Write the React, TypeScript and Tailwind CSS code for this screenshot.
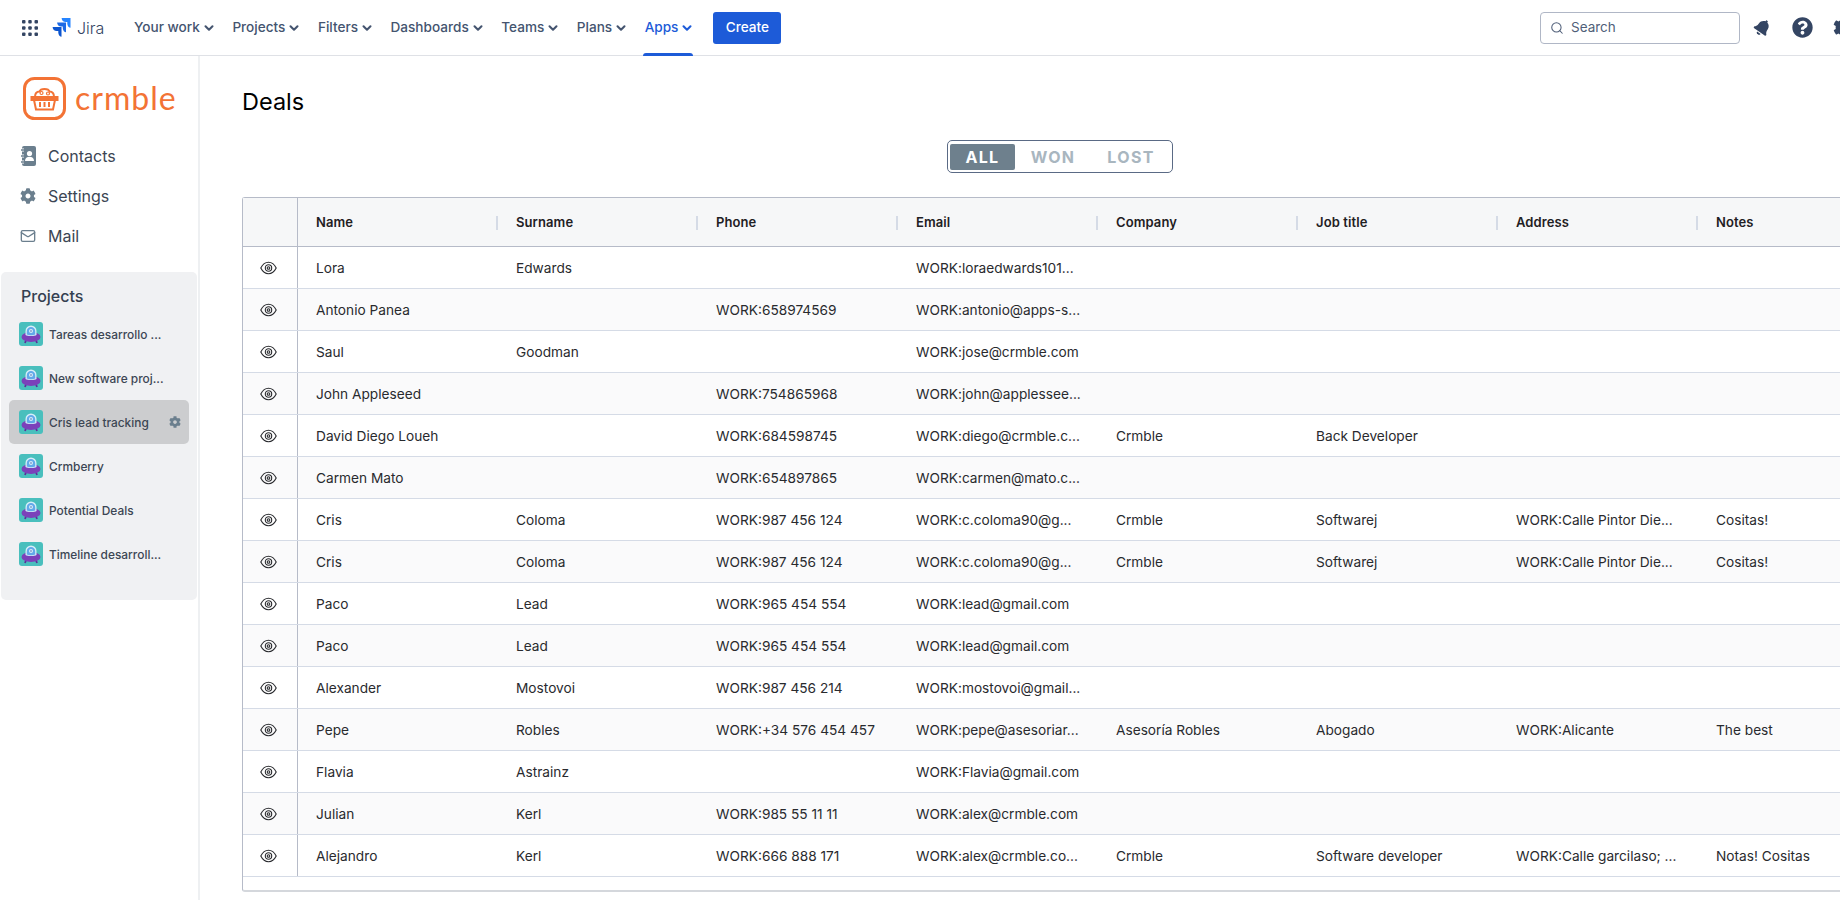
import React from 'react';
import { ChevronDown, Mail, Search } from 'lucide-react';
import { FaBell, FaCog, FaQuestionCircle } from 'react-icons/fa';

const navItems = ['Your work', 'Projects', 'Filters', 'Dashboards', 'Teams', 'Plans', 'Apps'];
const columns = ['Name', 'Surname', 'Phone', 'Email', 'Company', 'Job title', 'Address', 'Notes'];
const projects = [
  'Tareas desarrollo ...',
  'New software proj...',
  'Cris lead tracking',
  'Crmberry',
  'Potential Deals',
  'Timeline desarroll...',
];

const rows = [
  ['Lora', 'Edwards', '', 'WORK:loraedwards101...', '', '', '', ''],
  ['Antonio Panea', '', 'WORK:658974569', 'WORK:antonio@apps-s...', '', '', '', ''],
  ['Saul', 'Goodman', '', 'WORK:jose@crmble.com', '', '', '', ''],
  ['John Appleseed', '', 'WORK:754865968', 'WORK:john@applessee...', '', '', '', ''],
  ['David Diego Loueh', '', 'WORK:684598745', 'WORK:diego@crmble.c...', 'Crmble', 'Back Developer', '', ''],
  ['Carmen Mato', '', 'WORK:654897865', 'WORK:carmen@mato.c...', '', '', '', ''],
  ['Cris', 'Coloma', 'WORK:987 456 124', 'WORK:c.coloma90@g...', 'Crmble', 'Softwarej', 'WORK:Calle Pintor Die...', 'Cositas!'],
  ['Cris', 'Coloma', 'WORK:987 456 124', 'WORK:c.coloma90@g...', 'Crmble', 'Softwarej', 'WORK:Calle Pintor Die...', 'Cositas!'],
  ['Paco', 'Lead', 'WORK:965 454 554', 'WORK:lead@gmail.com', '', '', '', ''],
  ['Paco', 'Lead', 'WORK:965 454 554', 'WORK:lead@gmail.com', '', '', '', ''],
  ['Alexander', 'Mostovoi', 'WORK:987 456 214', 'WORK:mostovoi@gmail...', '', '', '', ''],
  ['Pepe', 'Robles', 'WORK:+34 576 454 457', 'WORK:pepe@asesoriar...', 'Asesoría Robles', 'Abogado', 'WORK:Alicante', 'The best'],
  ['Flavia', 'Astrainz', '', 'WORK:Flavia@gmail.com', '', '', '', ''],
  ['Julian', 'Kerl', 'WORK:985 55 11 11', 'WORK:alex@crmble.com', '', '', '', ''],
  ['Alejandro', 'Kerl', 'WORK:666 888 171', 'WORK:alex@crmble.co...', 'Crmble', 'Software developer', 'WORK:Calle garcilaso; ...', 'Notas! Cositas'],
];

const AppGrid = () => (
  <svg width="16" height="16" viewBox="0 0 16 16" fill="#344563">
    {[1.75, 8, 14.25].map((y) =>
      [1.75, 8, 14.25].map((x) => <rect key={`${x}-${y}`} x={x - 1.75} y={y - 1.75} width="3.5" height="3.5" rx="1" />),
    )}
  </svg>
);

const JiraMark = () => (
  <svg width="19" height="19" viewBox="0 0 19 19">
    <path d="M18.5 0H9.6c0 2.3 1.8 4.1 4.1 4.1h1.6v1.6c0 2.3 1.9 4.1 3.2 4.1z" fill="#2684ff" />
    <path d="M14 4.5H5.1c0 2.3 1.8 4.1 4.1 4.1h1.6v1.6c0 2.3 1.9 4.1 3.2 4.1z" fill="#1d6ae5" />
    <path d="M9.5 9H.6c0 2.3 1.8 4.1 4.1 4.1h1.6v1.6c0 2.3 1.9 4.1 3.2 4.1z" fill="#0c55cf" />
  </svg>
);

const BasketLogo = () => (
  <svg width="43" height="43" viewBox="0 0 43 43" fill="none" stroke="#f37335" strokeWidth="2">
    <rect x="1.500" y="1.500" width="40" height="40" rx="10" strokeWidth="3" />
    <path d="M8.500 20h26v3h-26z" fill="#f37335" />
    <path d="M11 23l2 9.500h17L32 23" />
    <path d="M17 25v5M21.500 25v5M26 25v5" />
    <path d="M12 20c0-3.500 2-5.500 4.500-5.500 1-3.500 9-3.500 10 0 3 0 4.500 2 4.500 5.500" />
    <circle cx="18.500" cy="16" r="1.500" strokeWidth="1.200" />
    <circle cx="25" cy="16.500" r="1.500" strokeWidth="1.200" />
  </svg>
);

const ContactsIcon = () => (
  <svg width="15" height="20" viewBox="0 0 15 20">
    <rect x="1" y="0" width="14" height="20" rx="2" fill="#6b7f8e" />
    <circle cx="8.500" cy="7.500" r="2.600" fill="#fff" />
    <path d="M4 15c0-3 2-4.200 4.500-4.200S13 12 13 15z" fill="#fff" />
    <path d="M0 4h3M0 10h3M0 16h3" stroke="#fff" strokeWidth="3" />
    <path d="M0 4h3M0 10h3M0 16h3" stroke="#6b7f8e" strokeWidth="1.400" />
  </svg>
);

const ProjectIcon = () => (
  <svg width="24" height="24" viewBox="0 0 24 24" className="shrink-0">
    <rect width="24" height="24" rx="3" fill="#49bfbd" />
    <path d="M6 21l1.500-4M18 21l-1.500-4" stroke="#5e2f9b" strokeWidth="1.800" />
    <ellipse cx="12" cy="15" rx="9.500" ry="5" fill="#7b41ba" />
    <path d="M6.500 13V9a5.500 5.500 0 0 1 11 0v4c-2 1.300-9 1.300-11 0z" fill="#d6eef8" />
    <path d="M7.800 12.500V9.200a4.200 4.200 0 0 1 8.400 0v3.300c-2 1-6.400 1-8.400 0z" fill="#62a9ea" />
    <circle cx="12" cy="9" r="2" fill="#d6eef8" />
    <circle cx="12" cy="9" r="0.800" fill="#4d6fb5" />
  </svg>
);

const EyeIcon = () => (
  <svg width="17" height="14" viewBox="0 0 17 14" fill="none" stroke="#292a2e" strokeWidth="1.100" className="mr-[3px]">
    <path d="M.8 7C2.800 3 5.400 1.300 8.500 1.300S14.200 3 16.200 7c-2 4-4.600 5.700-7.700 5.700S2.800 11 .8 7z" />
    <circle cx="8.500" cy="7" r="3.200" />
    <circle cx="8.500" cy="7" r="1.300" />
  </svg>
);

const App: React.FC = () => {
  return (
    <div className="h-screen w-[1840px] overflow-hidden flex flex-col bg-white font-[Inter,sans-serif] text-[#292a2e]">
      {/* Jira top bar */}
      <nav className="h-[56px] shrink-0 border-b border-[#dfe1e6] flex items-center pl-[22px]">
        <AppGrid />
        <div className="ml-[14px] flex items-center gap-[6px] w-[62px]">
          <JiraMark />
          <span className="text-[16px] font-light text-[#344563] leading-none">Jira</span>
        </div>
        <div className="ml-[18px] flex h-full gap-[15.5px]">
          {navItems.map((item) => {
            const active = item === 'Apps';
            return (
              <div
                key={item}
                className={`relative flex items-center gap-[2px] px-[2px] text-[13.6px] font-medium ${active ? 'text-[#1d5bd8]' : 'text-[#44546f]'}`}
              >
                {item}
                <ChevronDown size={14} strokeWidth={3.5} className="mr-[-3px]" />
                {active && <div className="absolute bottom-[-1px] left-0 right-0 h-[3px] rounded-t-sm bg-[#1d5bd8]" />}
              </div>
            );
          })}
        </div>
        <button className="ml-[20px] h-[32px] w-[68px] rounded-[3px] bg-[#1d5bd8] text-white text-[13.6px] font-medium">Create</button>
        <div className="ml-auto flex items-center">
          <div className="w-[200px] h-[32px] rounded-[4px] border-[1.5px] border-[#b0b7c6] flex items-center pl-[9px] gap-[7px] text-[13.5px] text-[#505f79]">
            <Search size={14} strokeWidth={1.8} />
            Search
          </div>
          <FaBell size={17} className="ml-[14px] text-[#344563] rotate-[35deg]" />
          <FaQuestionCircle size={21} className="ml-[21px] text-[#344563]" />
          <FaCog size={21} className="ml-[20px] mr-[-14px] text-[#344563]" />
        </div>
      </nav>

      <div className="flex flex-1 min-h-0">
        {/* Sidebar */}
        <aside className="w-[200px] shrink-0 border-r-2 border-[#eef0f2]">
          <div className="pl-[23px] pt-[21px] flex items-center gap-[9px]">
            <BasketLogo />
            <span className="text-[32px] leading-none font-[Lato,sans-serif] text-[#f37335] tracking-[1px] pb-[2px]">crmble</span>
          </div>
          <div className="mt-[16px] text-[16px] text-[#3c4654]">
            <div className="h-10 flex items-center pl-[21px] gap-[12px]">
              <ContactsIcon />
              Contacts
            </div>
            <div className="h-10 flex items-center pl-[20px] gap-[12px]">
              <FaCog size={16} className="text-[#6b7f8e]" />
              Settings
            </div>
            <div className="h-10 flex items-center pl-[20px] gap-[12px]">
              <Mail size={16} strokeWidth={2} className="text-[#6b7f8e]" />
              Mail
            </div>
          </div>
          <div className="mt-[16px] ml-[1px] w-[196px] h-[328px] rounded-[5px] bg-[#f0f1f3] px-[8px] pt-[12px]">
            <div className="h-6 pl-[12px] text-[16px] leading-6 font-medium text-[#344050]">Projects</div>
            <div className="mt-[4px]">
              {projects.map((name, i) => (
                <div
                  key={name}
                  className={`relative h-[44px] w-[180px] rounded-[5px] flex items-center pl-[10px] gap-[6px] text-[11.9px] font-medium text-[#3c4654] ${i === 2 ? 'bg-[#cccdcf]' : ''}`}
                >
                  <ProjectIcon />
                  <span className="pt-[2px]">{name}</span>
                  {i === 2 && <FaCog size={12} className="absolute right-[8px] text-[#6b7f8e]" />}
                </div>
              ))}
            </div>
          </div>
        </aside>

        {/* Deals */}
        <main className="flex-1 min-w-0 pl-[42px]">
          <h1 className="pt-[30px] text-[23.5px] leading-8 text-black">Deals</h1>
          <div className="w-[1636px] mt-[22px] flex justify-center">
            <div className="w-[226px] h-[33px] rounded-[5px] border-[1.5px] border-[#5a6a85] flex items-center pl-[2px] text-[16px] font-bold tracking-[1.3px] text-[#a9b6bf]">
              <div className="w-[65px] h-[26px] rounded-[2px] bg-[#6e808d] text-white flex items-center justify-center">ALL</div>
              <div className="w-[76px] text-center">WON</div>
              <div className="w-[80px] text-center">LOST</div>
            </div>
          </div>
          <div className="mt-[24px] w-[1700px] h-[695px] rounded-tl-[3px] rounded-bl-[3px] border-l border-t border-b-2 border-[#b6bbc8] border-b-[#d4d7dc] text-[13.7px]">
            <div className="h-[49px] flex bg-[#f6f7f8] border-b border-[#b6bbc8] text-[13px] font-semibold text-[#1f2023] tracking-[0.1px]">
              <div className="w-[55px] shrink-0 border-r border-[#b6bbc8]" />
              {columns.map((col, i) => (
                <div key={col} className="w-[200px] shrink-0 flex items-center justify-between pl-[18px] pt-[1px]">
                  {col}
                  {i < columns.length - 1 && <div className="w-[2px] h-[14px] bg-[#d5dbe6]" />}
                </div>
              ))}
            </div>
            {rows.map((row, r) => (
              <div key={r} className={`h-[42px] flex border-b border-[#d5dbe6] ${r % 2 === 1 ? 'bg-[#fafafb]' : 'bg-white'}`}>
                <div className="w-[55px] shrink-0 border-r border-[#b6bbc8] flex items-center justify-center">
                  <EyeIcon />
                </div>
                {row.map((cell, c) => (
                  <div key={c} className="w-[200px] shrink-0 flex items-center pl-[18px] pt-[2px] whitespace-nowrap">
                    {cell}
                  </div>
                ))}
              </div>
            ))}
          </div>
        </main>
      </div>
    </div>
  );
};

export default App;
